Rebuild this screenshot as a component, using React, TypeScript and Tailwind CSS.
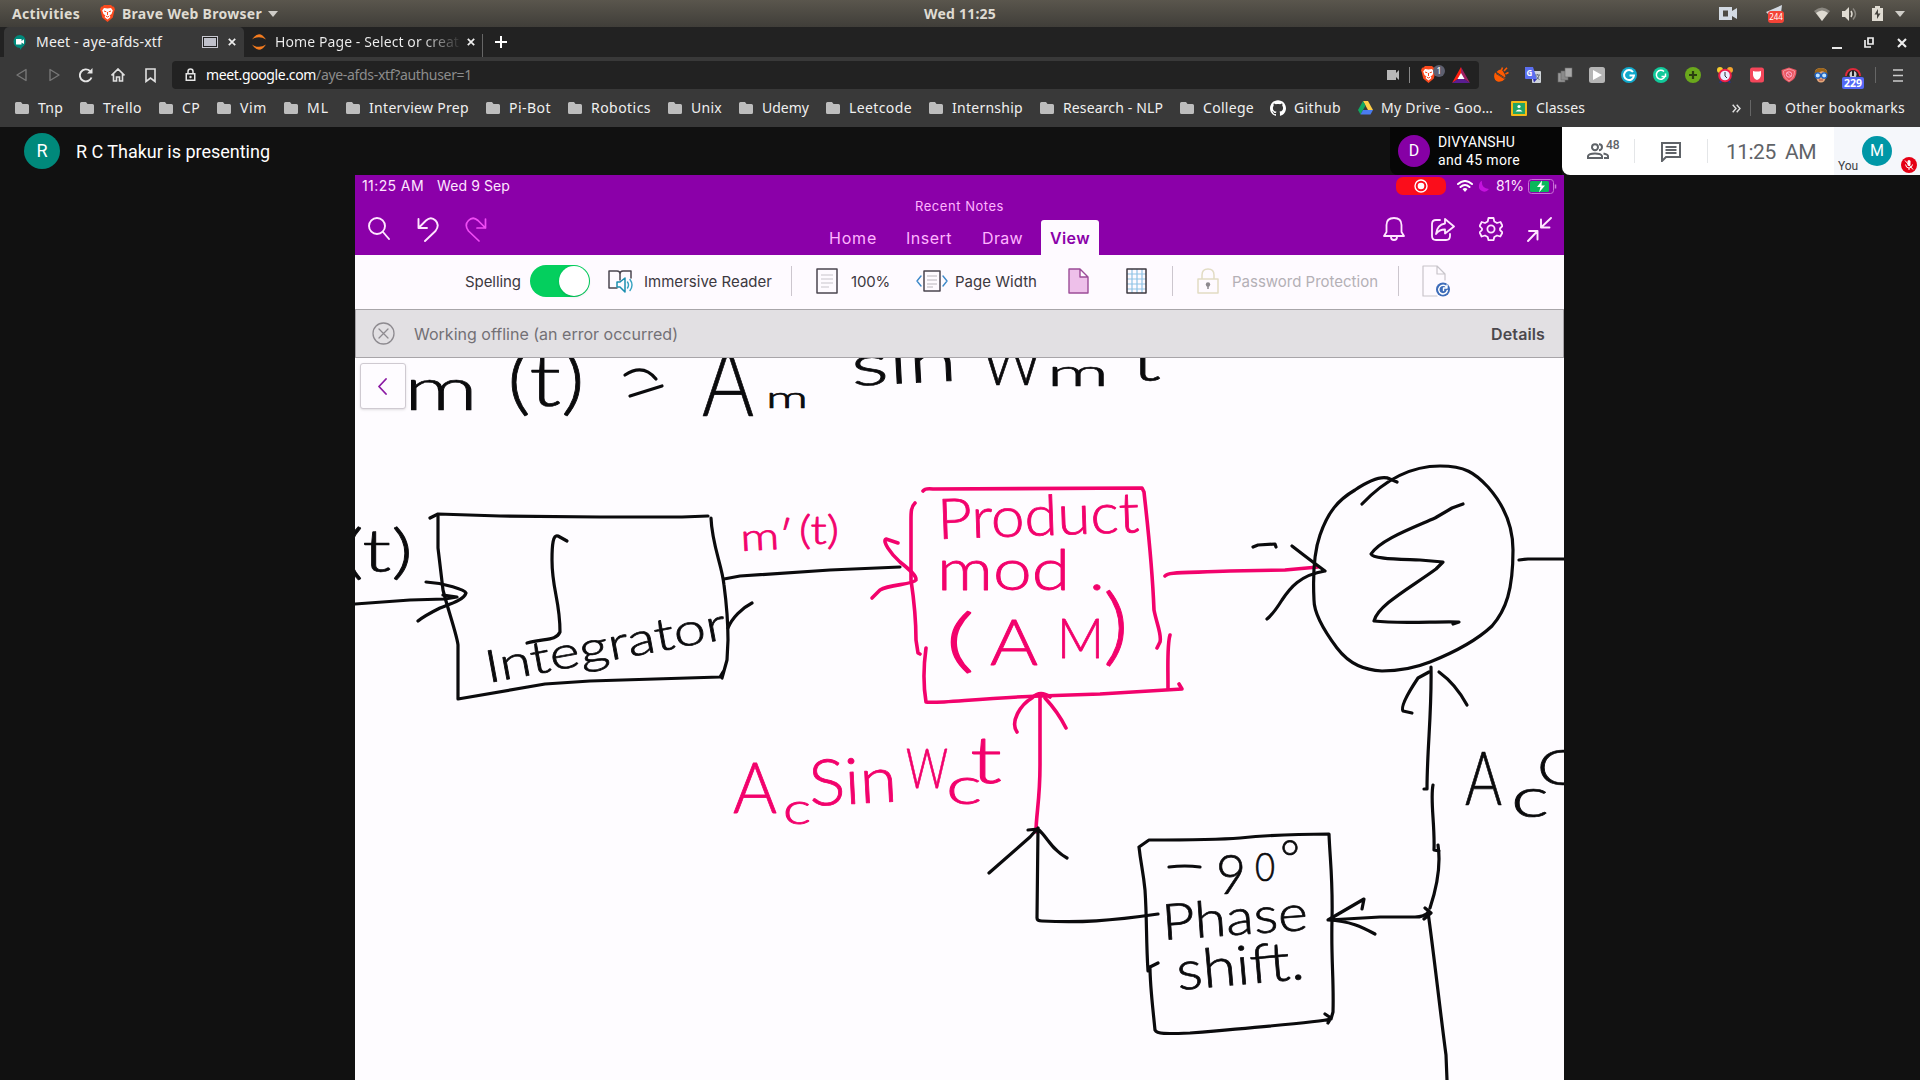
import React, { useLayoutEffect, useRef, useState } from 'react';
import { SiGithub } from 'react-icons/si';

/* Text that is spaced out so that it takes exactly the given width. */
function Fit({ w, children, className = '' }: { w: number; children: string; className?: string }) {
  const ref = useRef<HTMLSpanElement>(null);
  const [ls, setLs] = useState(0);
  useLayoutEffect(() => {
    if (ref.current) setLs((w - ref.current.getBoundingClientRect().width) / children.length);
  }, []);
  return (
    <span className="block shrink-0 whitespace-pre" style={{ width: w }}>
      <span ref={ref} className={'inline-block ' + className} style={{ letterSpacing: ls }}>{children}</span>
    </span>
  );
}

const Folder = () => (
  <svg className="shrink-0" width="14" height="12" viewBox="0 0 14 12"><path d="M0 1.5Q0 0 1.5 0H6l1.5 2H12.500Q14 2 14 3.500V10.500Q14 12 12.500 12H1.500Q0 12 0 10.500Z" fill="#bdbdbd" /></svg>
);
const Caret = () => <svg className="shrink-0" width="10" height="6" viewBox="0 0 10 6"><path d="M0 0H10L5 6Z" fill="#cfcdc8" /></svg>;
const Close = ({ s = 8 }: { s?: number }) => (
  <svg className="shrink-0" width={s} height={s} viewBox="0 0 8 8"><path d="M.8.8 7.200 7.200M7.200.8.8 7.200" stroke="#eee" strokeWidth="1.700" /></svg>
);
const Lion = ({ className = '' }: { className?: string }) => (
  <svg className={className} width="15" height="17" viewBox="0 0 15 17">
    <path d="M4 0H11L12.500 1.500 14 1.800 15 4.500 14.300 6 12.800 12.500 7.500 17 2.200 12.500 .7 6 0 4.500 1 1.800 2.500 1.500Z" fill="#fb4a1e" />
    <path d="M4 3 7.500 3.600 11 3 12.800 5.500 11.500 9 9.500 10.500 10.500 12 7.500 14.500 4.500 12 5.500 10.500 3.500 9 2.200 5.500Z" fill="#fff" />
    <path d="M4 6 6.300 6.800M11 6 8.700 6.800M7.500 7V10M6 11.200 7.500 12 9 11.200" stroke="#fb4a1e" strokeWidth="1" fill="none" />
  </svg>
);

function SystemBar() {
  return (
    <div className="grid h-[27px] grid-cols-[1fr_auto_1fr] items-center bg-gradient-to-b from-[#5a564d] to-[#403e39] text-[14px] leading-none font-bold text-[#dfdbd2]">
      <div className="flex items-center pl-3">
        <Fit w={68}>Activities</Fit>
        <Lion className="ml-[20px]" />
        <div className="ml-[7px]"><Fit w={140}>Brave Web Browser</Fit></div>
        <div className="ml-[6px]"><Caret /></div>
      </div>
      <Fit w={72}>Wed 11:25</Fit>
      <div className="flex items-center justify-end pr-[15px]">
        <svg width="18" height="13" viewBox="0 0 18 13"><path fillRule="evenodd" d="M0 0H13V4L18 1V12L13 9V13H0ZM4 3.500V9.500H9V3.500Z" fill="#d3dae3" /></svg>
        <div className="relative ml-[29px] h-[18px] w-[18px]">
          <svg width="18" height="18" viewBox="0 0 18 18"><path d="M0 7 16 0 15 8 4 17 2 9Z" fill="#d3dae3" /></svg>
          <span className="absolute top-[6px] left-[2px] w-4 rounded-[3px] bg-[#f44336] text-center text-[8px] leading-[12px] font-normal text-white">244</span>
        </div>
        <svg className="ml-[30px]" width="16" height="14" viewBox="0 0 16 14"><path d="M0 4Q8-3 16 4L8 14Z" fill="#8a8780" /><path d="M2 6Q8 1 14 6L8 14Z" fill="#dfdbd2" /></svg>
        <svg className="ml-[12px]" width="15" height="14" viewBox="0 0 15 14"><path d="M0 4H3L7 0V14L3 10H0Z" fill="#dfdbd2" /><path d="M9 4Q11 7 9 10" stroke="#dfdbd2" strokeWidth="1.500" fill="none" /><path d="M11 1.500Q16 7 11 12.500" stroke="#8a8780" strokeWidth="1.500" fill="none" /></svg>
        <svg className="ml-[15px]" width="11" height="15" viewBox="0 0 11 15"><path d="M0 2H3V0H8V2H11V15H0Z" fill="#dfdbd2" /><path d="M6 3 2.500 8.500H5V13L8.500 7.500H6Z" fill="#45433e" /></svg>
        <div className="ml-[12px]"><Caret /></div>
      </div>
    </div>
  );
}

function TabStrip() {
  return (
    <div className="flex h-[30px] items-center bg-[#222] pl-1 text-[14px] leading-none text-[#f0f0f0]">
      <div className="flex h-full w-[240px] shrink-0 items-center rounded-t-[5px] bg-[#393939] pl-[9px]">
        <svg width="14" height="15" viewBox="0 0 14 15"><path d="M7 0A6.500 6.500 0 0 1 9.500 12L7 15V13A6.500 6.500 0 0 1 7 0Z" fill="#00897b" /><path d="M3 4H8.500V6L11 4.300V9L8.500 7.500V9.500H3Z" fill="#fff" /></svg>
        <div className="ml-[9px]"><Fit w={126}>Meet - aye-afds-xtf</Fit></div>
        <div className="ml-[40px] h-3 w-4 border border-[#c8c8d0] bg-[#222] p-[1px]"><div className="h-full bg-[#bfc0ca]" /></div>
        <div className="ml-[10px]"><Close /></div>
      </div>
      <svg className="ml-[7px] shrink-0" width="16" height="16" viewBox="0 0 16 16"><path d="M1 5.500Q8-5 15 5.500Q8 .8 1 5.500ZM1 10.500Q8 21 15 10.500Q8 15.200 1 10.500Z" fill="#f57c1f" /></svg>
      <div className="ml-[8px] h-5 w-[184px] overflow-hidden bg-gradient-to-r from-[#f0f0f0] from-80% to-[#333] bg-clip-text pt-[3px] text-transparent"><Fit w={184}>Home Page - Select or creat</Fit></div>
      <div className="ml-[8px]"><Close /></div>
      <div className="ml-[7px] h-[23px] w-px self-end bg-[#666]" />
      <svg className="ml-[12px]" width="12" height="12" viewBox="0 0 12 12"><path d="M6 0V12M0 6H12" stroke="#fff" strokeWidth="2" /></svg>
      <div className="ml-auto flex h-3 items-end pr-[13px]">
        <div className="-mb-[1px] h-[2px] w-[10px] bg-[#e8e8e8]" />
        <svg className="ml-[22px]" width="10" height="11" viewBox="0 0 10 11"><path d="M4 1H9V7H4ZM1 3V10H7" stroke="#eee" strokeWidth="1.700" fill="none" /></svg>
        <div className="ml-[23px]"><Close s={10} /></div>
      </div>
    </div>
  );
}

const extensions: React.ReactNode[] = [
  <g><path d="M2 5.500 12.500 11.500Q9 15.500 4.500 14.500Q-.5 12 2 5.500Z" fill="#ff5a00" /><path d="M3.500 5Q8-.5 11 6Q13 9 12 10.500Z" fill="#ff5a00" /><path d="M3 6.500 12 12" stroke="#393939" strokeWidth=".8" /><path d="M8.500 3 9.500.5M11 4 14 .8M12.500 7 15.500 5.500" stroke="#ff5a00" strokeWidth="1.600" /></g>,
  <g><rect x="7" y="4" width="9" height="12" rx="1" fill="#cfd4da" /><path d="M0 0H8L12 12H1Q0 12 0 11Z" fill="#5b6ff0" /><path d="M8 12H12L9 15.500Z" fill="#3431b6" /><text x="1.500" y="8.500" fontSize="8" fontWeight="700" fill="#fff">G</text><path d="M10 8H15M12.500 7V8M11 13Q14 11 14 8M11.500 9.500 14.500 13" stroke="#6b7480" fill="none" /></g>,
  <g stroke="#666" strokeWidth=".6"><rect x="1" y="6" width="7" height="9" fill="#999" /><rect x="4" y="4" width="7" height="9" fill="#8a8a8a" /><rect x="8" y="1" width="7" height="9" fill="#a8a8a8" /></g>,
  <g><rect width="16" height="16" rx="2.500" fill="#b5b5b5" /><path d="M4 3 13 8 4 13Z" fill="#fff" /></g>,
  <g><circle cx="8" cy="8" r="8" fill="#11a9cc" /><path d="M12 5A5 5 0 1 0 13 8.500H8.500" stroke="#fff" strokeWidth="2" fill="none" /></g>,
  <g><circle cx="8" cy="8" r="8" fill="#11c99a" /><path d="M11 4.500A4.500 4.500 0 1 0 12 9.500H8.500M12.500 6.500V10" stroke="#fff" strokeWidth="1.500" fill="none" /></g>,
  <g><circle cx="8" cy="8" r="8" fill="#6aa81c" /><path d="M8 4V12M4 8H12" stroke="#2b3f10" strokeWidth="2.200" /></g>,
  <g><circle cx="3" cy="3" r="3" fill="#f5cb2e" /><circle cx="13" cy="3" r="3" fill="#f5a52e" /><path d="M3 16 5 12M13 16 11 12" stroke="#24348a" strokeWidth="2" /><circle cx="8" cy="8.500" r="5.800" fill="#e8f0ff" stroke="#f0204a" strokeWidth="2" /><path d="M8 5V9L10 11" stroke="#333" fill="none" /></g>,
  <g><rect x="1" y=".5" width="14" height="15" rx="2.500" fill="#f4465a" /><path d="M4 4Q8 5 12 4V8Q11.500 12 8 13Q4.500 12 4 8Z" fill="#fff" /></g>,
  <g><path d="M8 .5 15.500 3Q16 12 8 15.500Q0 12 .5 3Z" fill="#ea5460" /><path d="M8 2 13.500 4Q13.500 11 8 14Q2.500 11 2.500 4Z" fill="none" stroke="#f6b0b5" strokeWidth=".7" /><circle cx="8" cy="7.500" r="2.700" fill="none" stroke="#fbd" strokeWidth=".9" /><path d="M6 5.500 10 9.500" stroke="#fbd" strokeWidth=".9" /></g>,
  <g><path d="M2 7Q1 1 8 1T14 7L13 10Q12 15.500 8 15.500T3 10Z" fill="#e5a77a" /><path d="M1.500 8Q1 1 8 1T14.500 8Q11 3.500 8 4.500T1.500 8Z" fill="#9a6418" /><circle cx="4.800" cy="8.500" r="2.700" fill="#bfe3ff" stroke="#1b5fc0" strokeWidth="1.300" /><circle cx="11.200" cy="8.500" r="2.700" fill="#bfe3ff" stroke="#1b5fc0" strokeWidth="1.300" /><path d="M6 13H10" stroke="#a3453a" /></g>,
];

function Toolbar() {
  return (
    <div className="flex h-[34px] items-center bg-[#393939] pt-[2px] pr-[17px]">
      <svg className="ml-[16px] shrink-0" width="11" height="14" viewBox="0 0 11 14"><path d="M10 1.500V12.500L1 7Z" fill="none" stroke="#777" strokeWidth="1.400" strokeLinejoin="round" /></svg>
      <svg className="ml-[22px] shrink-0" width="11" height="14" viewBox="0 0 11 14"><path d="M1 1.500V12.500L10 7Z" fill="none" stroke="#777" strokeWidth="1.400" strokeLinejoin="round" /></svg>
      <svg className="ml-[19px] shrink-0" width="15" height="15" viewBox="0 0 15 15"><path d="M12.500 9.500A6 6 0 1 1 11 3" fill="none" stroke="#e6e6e6" strokeWidth="1.900" /><path d="M8 5.500H13.500V0Z" fill="#e6e6e6" /></svg>
      <svg className="ml-[17px] shrink-0" width="14" height="14" viewBox="0 0 14 14"><path d="M.5 7.500 7 1 13.500 7.500M2.500 6V13H5.500V9H8.500V13H11.500V6" fill="none" stroke="#e0e0e0" strokeWidth="1.600" /></svg>
      <svg className="ml-[20px] shrink-0" width="11" height="15" viewBox="0 0 11 15"><path d="M1 1H10V13.500L5.500 10 1 13.500Z" fill="none" stroke="#e0e0e0" strokeWidth="1.600" /></svg>
      <div className="ml-[16px] flex h-7 w-[1307px] shrink-0 items-center rounded bg-[#222] pl-[13px] text-[14px] leading-none">
        <svg width="11" height="14" viewBox="0 0 11 14"><path fillRule="evenodd" d="M.5 5H10.500V13H.5ZM2 6.500V11.500H9V6.500Z" fill="#e6e6e6" /><path d="M3 6V3.500Q3 1 5.500 1T8 3.500V6" stroke="#e6e6e6" strokeWidth="1.500" fill="none" /><circle cx="5.500" cy="9" r="1.200" fill="#e6e6e6" /></svg>
        <div className="ml-[10px] flex"><Fit w={110} className="text-white">meet.google.com</Fit><Fit w={156} className="text-[#8c8c8c]">/aye-afds-xtf?authuser=1</Fit></div>
        <svg className="ml-auto" width="13" height="10" viewBox="0 0 13 10"><path d="M0 0H9V3L12 0V10L9 7V10H0Z" fill="#b8b8b8" /></svg>
        <div className="ml-[9px] h-4 w-px bg-[#888]" />
        <div className="relative ml-[11px] h-[18px] w-[25px]">
          <Lion />
          <span className="absolute -top-px left-3 h-3 w-3 rounded-full bg-[#5e6070] text-center text-[9px] leading-3 text-white">1</span>
        </div>
        <svg className="mr-[9px] ml-[6px]" width="18" height="16" viewBox="0 0 18 16"><path d="M9 0 0 16 9 10Z" fill="#ff1f10" /><path d="M9 0 18 16 9 10Z" fill="#9e1f63" /><path d="M0 16H18L9 10Z" fill="#5a1d91" /><path d="M9 6 12.500 12H5.500Z" fill="#fff" /></svg>
      </div>
      <div className="ml-[14px] flex gap-4">
        {extensions.map((e, i) => <svg key={i} className="shrink-0" width="16" height="16" viewBox="0 0 16 16">{e}</svg>)}
        <div className="relative h-4 w-4 shrink-0">
          <svg width="16" height="16" viewBox="0 0 16 16"><path d="M0 9A8 8 0 0 1 16 9" fill="#e02a3b" /><path d="M2 9A6 6 0 0 1 14 9" fill="#222" /><circle cx="8" cy="7.500" r="3.500" fill="#ccc" /><path d="M8 4V9" stroke="#222" strokeWidth="2" /></svg>
          <span className="absolute top-[10px] -left-[3px] w-[22px] rounded-[2px] bg-[#5468f5] text-center text-[10.500px] leading-[12px] font-bold text-white">229</span>
        </div>
      </div>
      <div className="ml-[14px] h-4 w-px bg-[#666]" />
      <svg className="ml-auto shrink-0" width="10" height="13" viewBox="0 0 10 13"><path d="M0 1H10M0 6.500H10M0 12H10" stroke="#ccc" strokeWidth="1.600" /></svg>
    </div>
  );
}

const folders: [string, number][] = [
  ['Tnp', 25], ['Trello', 39], ['CP', 18], ['Vim', 27], ['ML', 22], ['Interview Prep', 100], ['Pi-Bot', 42], ['Robotics', 60],
  ['Unix', 31], ['Udemy', 47], ['Leetcode', 63], ['Internship', 71], ['Research - NLP', 100], ['College', 51],
];

function Bookmarks() {
  return (
    <div className="flex h-9 items-center bg-[#393939] pb-[2px] pl-[15px] text-[14px] leading-none text-[#f0f0f0]">
      {folders.map(([name, w]) => (
        <div key={name} className="mr-[17px] flex shrink-0 items-center gap-[9px]"><Folder /><Fit w={w}>{name}</Fit></div>
      ))}
      <div className="flex shrink-0 items-center gap-2"><SiGithub className="ml-[-1px] h-4 w-4 text-white" /><Fit w={47}>Github</Fit></div>
      <div className="ml-[17px] flex shrink-0 items-center gap-2">
        <svg width="15" height="14" viewBox="0 0 15 14"><path d="M5 0H10L15 9H10Z" fill="#ffcf48" /><path d="M5 0 0 9 2.500 13.500 7.500 4.500Z" fill="#11a861" /><path d="M5 9H15L12.500 13.500H2.500Z" fill="#4a7cf0" /></svg>
        <Fit w={112}>My Drive - Goo…</Fit>
      </div>
      <div className="ml-[18px] flex shrink-0 items-center gap-[9px]">
        <svg width="16" height="15" viewBox="0 0 16 15"><rect width="16" height="15" rx="1" fill="#f5ba15" /><rect x="2" y="2" width="12" height="11" fill="#23a566" /><circle cx="8" cy="5.500" r="1.600" fill="#fff" /><path d="M4.500 10.500Q8 6.500 11.500 10.500Z" fill="#fff" /></svg>
        <Fit w={49}>Classes</Fit>
      </div>
      <div className="mr-[15px] ml-auto flex items-center">
        <svg width="9" height="9" viewBox="0 0 9 9"><path d="M.7.7 4 4.500.7 8.300M4.700.7 8 4.500 4.700 8.300" stroke="#e0e0e0" strokeWidth="1.400" fill="none" /></svg>
        <div className="mr-[11px] ml-[9px] h-4 w-px bg-[#666]" />
        <Folder />
        <div className="ml-[9px]"><Fit w={120}>Other bookmarks</Fit></div>
      </div>
    </div>
  );
}

function MeetHeader() {
  return (
    <div className="flex h-12 items-stretch bg-[#111] font-[Roboto,sans-serif] leading-none text-white">
      <div className="flex items-center pl-6">
        <div className="flex h-9 w-9 items-center justify-center rounded-full bg-[#00897b] text-[18px]">R</div>
        <div className="ml-[16px] pt-[2px]"><Fit w={194} className="text-[18px]">R C Thakur is presenting</Fit></div>
      </div>
      <div className="ml-auto flex w-[172px] items-center rounded-bl-lg bg-[#060606] pl-2">
        <div className="flex h-8 w-8 items-center justify-center rounded-full bg-[#8600a5] text-[16px]">D</div>
        <div className="ml-2 flex flex-col gap-1 text-[14px]"><Fit w={77}>DIVYANSHU</Fit><Fit w={82}>and 45 more</Fit></div>
      </div>
      <div className="flex w-[358px] items-stretch overflow-hidden rounded-bl-lg bg-white text-[#5f6368]">
        <div className="flex w-[272px] items-center pl-[25px]">
          <svg className="shrink-0" width="22" height="16" viewBox="0 0 22 16"><path d="M8 1.200A3 3 0 1 1 8 7.200 3 3 0 0 1 8 1.200ZM1 15V13Q2 10.500 8 10.500T15 13V15ZM12 1.200A3 3 0 1 1 12 7.200M16.500 10.500Q21 11.500 21 13V15H17" fill="none" stroke="#5f6368" strokeWidth="2" /></svg>
          <span className="-ml-[3px] w-[14px] shrink-0 pb-3 text-[12px] font-medium">48</span>
          <div className="ml-[14px] h-6 w-px bg-[#e4e6e8]" />
          <svg className="mt-[2px] ml-[26px] shrink-0" width="20" height="20" viewBox="0 0 20 20"><path d="M1 1H19V15H5L1 19ZM4.500 5H15.500M4.500 8H15.500M4.500 11H15.500" fill="none" stroke="#5f6368" strokeWidth="2" /></svg>
          <div className="mr-[18px] ml-[26px] h-6 w-px bg-[#e4e6e8]" />
          <div className="pt-[2px]"><Fit w={90} className="text-[21px]">11:25  AM</Fit></div>
        </div>
        <div className="flex flex-1 bg-[#f5f7fb]">
          <span className="self-end pb-[3px] pl-[4px] text-[12px] text-[#3c4043]"><Fit w={20}>You</Fit></span>
          <div className="ml-[4px] flex h-[30px] w-[30px] items-center justify-center self-center rounded-full bg-[#0097a7] text-[16px] text-white">M</div>
          <svg className="mb-[2px] ml-[9px] self-end" width="16" height="16" viewBox="0 0 16 16"><circle cx="8" cy="8" r="8" fill="#e50015" /><rect x="6.500" y="3" width="3" height="6" rx="1.500" fill="#fff" /><path d="M4.500 7.500Q5 11 8 11T11.500 7.500M8 11V13M4 3.500 12 12.500" stroke="#fff" fill="none" /></svg>
        </div>
      </div>
    </div>
  );
}

const line = { fill: 'none', strokeLinecap: 'round' as const, strokeLinejoin: 'round' as const };

function NotesHeader() {
  return (
    <div className="h-20 bg-[#8b00a9] text-[#ffe6ff]">
      <div className="flex h-[22px] items-center pl-[7px] text-[14px] leading-none">
        <Fit w={62}>11:25 AM</Fit><div className="ml-[13px]"><Fit w={73}>Wed 9 Sep</Fit></div>
        <div className="ml-auto flex h-[18px] w-[50px] items-center justify-center rounded-[7px] bg-[#fb0d1b]">
          <svg width="14" height="14" viewBox="0 0 14 14"><circle cx="7" cy="7" r="6" fill="none" stroke="#fff" strokeWidth="1.400" /><circle cx="7" cy="7" r="3.300" fill="#fff" /></svg>
        </div>
        <svg className="ml-[11px]" width="16" height="12" viewBox="0 0 16 12"><path d="M1 4Q8-2 15 4M3.500 7Q8 3 12.500 7" {...line} stroke="#fff" strokeWidth="2" /><path d="M5.500 9 8 12 10.500 9Q8 7 5.500 9Z" fill="#fff" /></svg>
        <svg className="ml-[6px]" width="10" height="11" viewBox="0 0 10 11"><path d="M3 0Q2 7 10 8Q7 12 3 10T0 4T3 0Z" fill="#c412dd" /></svg>
        <div className="ml-[7px]"><Fit w={28}>81%</Fit></div>
        <svg className="mr-[7px] ml-[4px]" width="29" height="15" viewBox="0 0 29 15"><rect x=".5" y=".5" width="25" height="14" rx="3" fill="none" stroke="#c770d5" /><rect x="2" y="2" width="19" height="11" rx="1.500" fill="#0bb75c" /><path d="M27.500 5.500V9.500" stroke="#d07fdc" strokeWidth="1.500" /><path d="M14 1.500 9 8H12.500L11 13.500 17 6.500H13.500Z" fill="#fff" /></svg>
      </div>
      <div className="grid h-[58px] grid-cols-3">
        <div className="flex items-start pt-[20px] pl-[13px]">
          <svg width="22" height="23" viewBox="0 0 22 23"><circle cx="9" cy="9" r="8" {...line} stroke="#ffe6ff" strokeWidth="1.900" /><path d="M15 15 21 22" {...line} stroke="#ffe6ff" strokeWidth="1.900" /></svg>
          <svg className="ml-[27px]" width="22" height="25" viewBox="0 0 22 25"><path d="M1.500 2V11H10M1.500 11 9 3.500Q14-1 18.500 3.500T18.500 14L8 24" {...line} stroke="#ffe6ff" strokeWidth="1.900" /></svg>
          <svg className="ml-[26px]" width="22" height="25" viewBox="0 0 22 25"><path d="M20.500 2V11H12M20.500 11 13 3.500Q8-1 3.500 3.500T3.500 14L14 24" {...line} stroke="#f14cf5" strokeWidth="1.700" /></svg>
        </div>
        <div className="flex flex-col items-center justify-between pt-[1px] text-[13px] leading-4 text-[#ffb5ff]">
          <Fit w={89}>Recent Notes</Fit>
          <div className="flex h-[35px] items-center pl-[9px] text-[16px] leading-none">
            <Fit w={48}>Home</Fit>
            <div className="ml-[29px]"><Fit w={46}>Insert</Fit></div>
            <div className="ml-[30px]"><Fit w={41}>Draw</Fit></div>
            <div className="ml-[18px] flex h-full w-[58px] items-center justify-center rounded-t-[3px] bg-[#fefaff] font-semibold text-[#8b00a9]"><Fit w={40}>View</Fit></div>
          </div>
        </div>
        <div className="flex items-start justify-end pt-[20px] pr-[12px]">
          <svg width="22" height="24" viewBox="0 0 22 24"><path d="M1 19H21L18.500 15V8Q18.500 1 11 1T3.500 8V15ZM8 20Q8 23 11 23T14 20" {...line} stroke="#ffe6ff" strokeWidth="1.800" /></svg>
          <svg className="ml-[26px]" width="24" height="24" viewBox="0 0 24 24"><path d="M9 3H5Q1 3 1 7V19Q1 23 5 23H15Q19 23 19 19V17" {...line} stroke="#ffe6ff" strokeWidth="1.800" /><path d="M14 2 23 9.500 14 16.500V12.500Q8 12.500 5 17Q6 8 14 6.500Z" {...line} stroke="#ffe6ff" strokeWidth="1.800" /></svg>
          <svg className="ml-[24px]" width="24" height="24" viewBox="0 0 24 24"><path d="M9.500 1H14.500L15.300 4.500 18 6 21.500 5 23.500 9 21 11.500V13L23.500 15.500 21.300 19.500 18 18.500 15.300 20 14.500 23.200H9.500L8.700 20 6 18.500 2.600 19.500.6 15.500 3 13V11.500L.6 9 2.700 5 6 6 8.700 4.500Z" {...line} stroke="#ffe6ff" strokeWidth="1.800" /><circle cx="12" cy="12" r="3.600" {...line} stroke="#ffe6ff" strokeWidth="1.800" /></svg>
          <svg className="ml-[24px]" width="25" height="25" viewBox="0 0 25 25"><path d="M24 1 14 10.500M14 2.500V10.500H22.500M1 24 10.500 14M2 14H10.500V22.500" {...line} stroke="#ffe6ff" strokeWidth="1.900" /></svg>
        </div>
      </div>
    </div>
  );
}

function ViewRibbon() {
  return (
    <div className="flex h-[54px] items-center bg-[#fefaff] pb-[2px] pl-[110px] text-[15px] leading-none text-[#3c3840]">
      <Fit w={56}>Spelling</Fit>
      <div className="ml-[9px] flex h-8 w-[60px] items-center justify-end rounded-full bg-[#04cf5e] p-[1px]"><div className="h-[30px] w-[30px] rounded-full bg-white shadow" /></div>
      <svg className="ml-[18px]" width="25" height="23" viewBox="0 0 25 23"><path d="M23 8V1H15Q12 1 12 4Q12 1 9 1H1V18H9M12 4V10" {...line} stroke="#4b4650" strokeWidth="1.500" /><path d="M9 12H12L17 8V22L12 17H9Z" {...line} stroke="#1b8eaf" strokeWidth="1.500" /><path d="M19.500 12Q21.500 15 19.500 18M22 9.500Q26 15 22 20.500" {...line} stroke="#35a3c0" strokeWidth="1.400" /></svg>
      <div className="ml-[11px]"><Fit w={128}>Immersive Reader</Fit></div>
      <div className="ml-[19px] h-[30px] w-px bg-[#ccc6ce]" />
      <svg className="ml-[24px]" width="22" height="26" viewBox="0 0 22 26"><rect x="1" y="1" width="20" height="24" {...line} stroke="#4b4650" strokeWidth="1.500" /><path d="M5 7H17M5 11H17M5 15H17M5 19H13" stroke="#c8c4cc" strokeWidth="1.200" /></svg>
      <div className="ml-[13px]"><Fit w={39}>100%</Fit></div>
      <svg className="ml-[26px]" width="32" height="22" viewBox="0 0 32 22"><rect x="8" y="1" width="16" height="20" {...line} stroke="#4b4650" strokeWidth="1.500" /><path d="M11 6H21M11 10H21M11 14H21M11 17H17" stroke="#b8b4bc" strokeWidth="1.200" /><path d="M5 6 1 11 5 16M27 6 31 11 27 16" {...line} stroke="#3d89c9" strokeWidth="1.400" /></svg>
      <div className="ml-[7px]"><Fit w={82}>Page Width</Fit></div>
      <svg className="ml-[31px]" width="21" height="26" viewBox="0 0 21 26"><path d="M1 1H12L20 9V25H1ZM12 1V9H20" {...line} fill="#eec0ea" stroke="#9c4c98" strokeWidth="1.400" /></svg>
      <svg className="ml-[37px]" width="21" height="26" viewBox="0 0 21 26"><path d="M6 1V25M11 1V25M16 1V25M1 6H20M1 11H20M1 16H20M1 21H20" stroke="#8fc3e6" strokeWidth="1.200" /><rect x="1" y="1" width="19" height="24" {...line} stroke="#3c3840" strokeWidth="1.500" /></svg>
      <div className="ml-[25px] h-[30px] w-px bg-[#ccc6ce]" />
      <svg className="ml-[24px]" width="22" height="26" viewBox="0 0 22 26"><path d="M1 11H21V25H1ZM5 11V7Q5 1 11 1T17 7V11" {...line} stroke="#e2dcc4" strokeWidth="1.500" /><circle cx="11" cy="16.500" r="2.200" fill="#8d898e" /><path d="M11 17V21" stroke="#8d898e" strokeWidth="1.500" /></svg>
      <div className="ml-[13px] text-[#b4b0b6]"><Fit w={146}>Password Protection</Fit></div>
      <div className="ml-[20px] h-[30px] w-px bg-[#ccc6ce]" />
      <svg className="ml-[23px]" width="29" height="32" viewBox="0 0 29 32"><path d="M15 31H1V1H15L23 9V15M15 1V9H23" {...line} stroke="#c8c4ca" strokeWidth="1.200" /><circle cx="21" cy="24.500" r="7" fill="#3d6cb9" /><path d="M24.500 22A4.300 4.300 0 1 0 25.300 25.500M25 20V23H21.500V25.500" {...line} stroke="#fff" strokeWidth="1.400" /></svg>
    </div>
  );
}

function OfflineBanner() {
  return (
    <div className="flex h-[49px] items-center border border-[#a8a5a9] bg-[#e2e0e3] pl-[16px] text-[16px] leading-none text-[#737075]">
      <svg width="23" height="23" viewBox="0 0 23 23"><circle cx="11.500" cy="11.500" r="10.500" {...line} stroke="#8e8b90" strokeWidth="1.300" /><path d="M7 7 16 16M16 7 7 16" {...line} stroke="#8e8b90" strokeWidth="1.300" /></svg>
      <div className="ml-[19px]"><Fit w={264}>Working offline (an error occurred)</Fit></div>
      <div className="mr-[18px] ml-auto font-semibold text-[#4b484d]"><Fit w={54}>Details</Fit></div>
    </div>
  );
}

type Note = [text: string, x: number, y: number, len: number, size: number, turn?: number];

const blackNotes: Note[] = [
  ['m', 404, 410, 74, 60], ['(t)', 507, 406, 78, 74], ['A', 702, 416, 52, 96], ['m', 766, 408, 42, 30],
  ['sin', 852, 386, 106, 58, -3], ['W', 982, 385, 60, 60], ['m', 1047, 386, 62, 38], ['t', 1131, 381, 30, 62],
  ['(t)', 342, 572, 71, 60], ['Integrator', 488, 683, 244, 45, -10.5],
  ['9', 1216, 894, 30, 56], ['0', 1255, 881, 20, 40], ['°', 1280, 876, 20, 50],
  ['Phase', 1163, 940, 146, 50, -4], ['shift.', 1178, 990, 128, 54, -5],
  ['A', 1465, 805, 37, 74], ['c', 1511, 817, 38, 56], ['C', 1537, 785, 44, 50],
];
const pinkNotes: Note[] = [
  ['m′', 741, 551, 54, 38, -3], ['(t)', 799, 544, 40, 40], ['Product', 938, 539, 202, 56, -2], ['mod .', 937, 590, 168, 58],
  ['(', 945, 664, 30, 68], ['A', 990, 665, 48, 64], ['M', 1057, 658, 47, 56], [')', 1103, 655, 26, 84],
  ['A', 733, 813, 44, 70], ['c', 783, 824, 28, 44], ['Sin', 810, 806, 88, 64, -3], ['W', 906, 788, 42, 56], ['c', 946, 804, 36, 52], ['t', 970, 783, 32, 66],
];

const blackInk = [
  'M625 375Q643 363 656 379M630 396 662 386',
  'M430 518 438 514 500 516 600 517 682 517 708 516',
  'M438 516V548L443 590C448 610 457 635 458 645V699L545 684 590 681 720 677 723 672',
  'M711 518C712 545 722 565 724 585 726 600 728 625 728 640L727 660 722 678',
  'M567 541 558 536C553 534 552 545 552 560 552 590 560 600 560 632 556 641 545 638 527 643',
  'M355 604 410 600 445 599 457 597 443 595M426 582C445 583 465 590 466 593 464 600 450 604 440 608 432 612 424 616 418 621',
  'M728 628C732 618 742 608 752 603M724 579 740 576 830 570 900 567',
  'M1362 504C1380 485 1405 466 1440 466 1465 466 1475 473 1488 487 1503 504 1513 525 1513 550 1513 590 1506 610 1492 626 1475 642 1450 654 1430 662 1410 670 1395 671 1382 671 1365 670 1350 665 1337 648 1322 628 1314 612 1314 600 1313 580 1313 555 1320 535 1328 512 1338 500 1355 490 1370 480 1382 475 1390 479L1397 482',
  'M1463 504 1452 508 1435 518C1410 529 1380 540 1371 554 1373 559 1395 559 1420 560L1443 562 1436 569C1410 588 1378 605 1374 621 1400 624 1440 621 1459 622L1453 624',
  'M1253 547 1258 545 1275 544 1276 547M1292 546Q1310 560 1325 571C1300 575 1290 588 1282 600 1277 608 1272 615 1267 619',
  'M1519 560 1528 559H1564',
  'M1412 713 1403 711C1400 706 1410 690 1418 678L1429 672M1439 672C1450 680 1460 692 1467 705',
  'M1431 667C1432 710 1427 750 1427 789L1424 789M1433 785C1430 800 1435 825 1434 850L1439 851M1438 845C1441 865 1436 890 1430 908M1425 908 1431 913 1424 919M1428 912C1434 955 1440 1010 1446 1055L1447 1080',
  'M1429 912Q1424 917 1415 917H1380L1328 920M1362 909 1364 899 1328 920C1350 921 1362 927 1375 934',
  'M1139 847 1149 840C1180 840 1215 840 1240 838 1270 835 1300 834 1329 834 1330 860 1333 880 1332 920 1331 960 1334 980 1333 1012L1331 1019C1320 1022 1250 1028 1190 1033 1165 1034 1157 1034 1155 1030 1152 1000 1150 985 1150 967L1158 963M1148 971C1146 940 1147 920 1145 890 1143 870 1141 865 1139 847M1325 1014 1331 1018 1328 1023',
  'M1169 867Q1185 865 1200 867',
  'M989 873 1030 837 1038 828M1028 830 1038 829C1048 838 1052 850 1067 858M1038 828 1037 918Q1037 921 1042 921C1080 923 1110 921 1158 914',
];
const pinkInk = [
  'M898 543 886 539C882 541 890 553 900 562 910 570 917 576 916 580 912 585 890 584 880 590L872 598',
  'M923 491Q925 488 933 489L1142 488 1144 492C1147 520 1152 560 1154 610 1157 625 1162 635 1160 642L1157 648',
  'M915 503C911 507 911 512 911 520V580C914 600 916 620 916 640L918 653 920 654',
  'M926 648C923 670 924 690 926 702 935 704 980 698 1040 696L1100 694 1182 689 1179 684M1170 635C1167 645 1168 660 1168 690',
  'M1165 576C1168 572 1180 573 1230 571L1285 570 1318 567',
  'M1017 732C1010 722 1020 705 1032 698Q1040 690 1050 697M1045 698Q1058 712 1066 728M1040 697V765C1040 800 1036 815 1036 832',
];

const Writing = ({ notes }: { notes: Note[] }) => (
  <>
    {notes.map(([t, x, y, len, size, turn = 0], i) => (
      <text key={i} x={x} y={y} textLength={len} lengthAdjust="spacingAndGlyphs" fontSize={size} transform={`rotate(${turn} ${x} ${y})`}>{t}</text>
    ))}
  </>
);

function Canvas() {
  return (
    <div className="relative h-[722px] overflow-hidden bg-[#fefcff]">
      <svg className="block font-[Lato,sans-serif] font-light" width="1209" height="722" viewBox="355 358 1209 722">
        <g fill="#f2026c" stroke="#f2026c" strokeWidth=".8" strokeLinejoin="round"><Writing notes={pinkNotes} /></g>
        <g {...line} stroke="#f2026c" strokeWidth="3.600">{pinkInk.map((d) => <path key={d} d={d} />)}</g>
        <g fill="#0b0b0d" stroke="#0b0b0d" strokeWidth=".7" strokeLinejoin="round"><Writing notes={blackNotes} /></g>
        <g {...line} stroke="#0b0b0d" strokeWidth="3.200">{blackInk.map((d) => <path key={d} d={d} />)}</g>
      </svg>
      <div className="absolute top-[5px] left-[5px] flex h-[46px] w-[46px] items-center justify-center rounded-[3px] border border-[#cfcad1] bg-[#fefcff] shadow-sm">
        <svg className="-ml-[2px]" width="9" height="17" viewBox="0 0 9 17"><path d="M8 1 1 8.500 8 16" {...line} stroke="#8b1aa3" strokeWidth="1.800" /></svg>
      </div>
    </div>
  );
}

export default function App() {
  return (
    <div className="flex h-[1080px] w-[1920px] flex-col overflow-hidden bg-[#111] font-['Noto_Sans',sans-serif]">
      <SystemBar />
      <TabStrip />
      <Toolbar />
      <Bookmarks />
      <MeetHeader />
      <main className="ml-[355px] w-[1209px] font-[Inter,sans-serif]">
        <NotesHeader />
        <ViewRibbon />
        <OfflineBanner />
        <Canvas />
      </main>
    </div>
  );
}
